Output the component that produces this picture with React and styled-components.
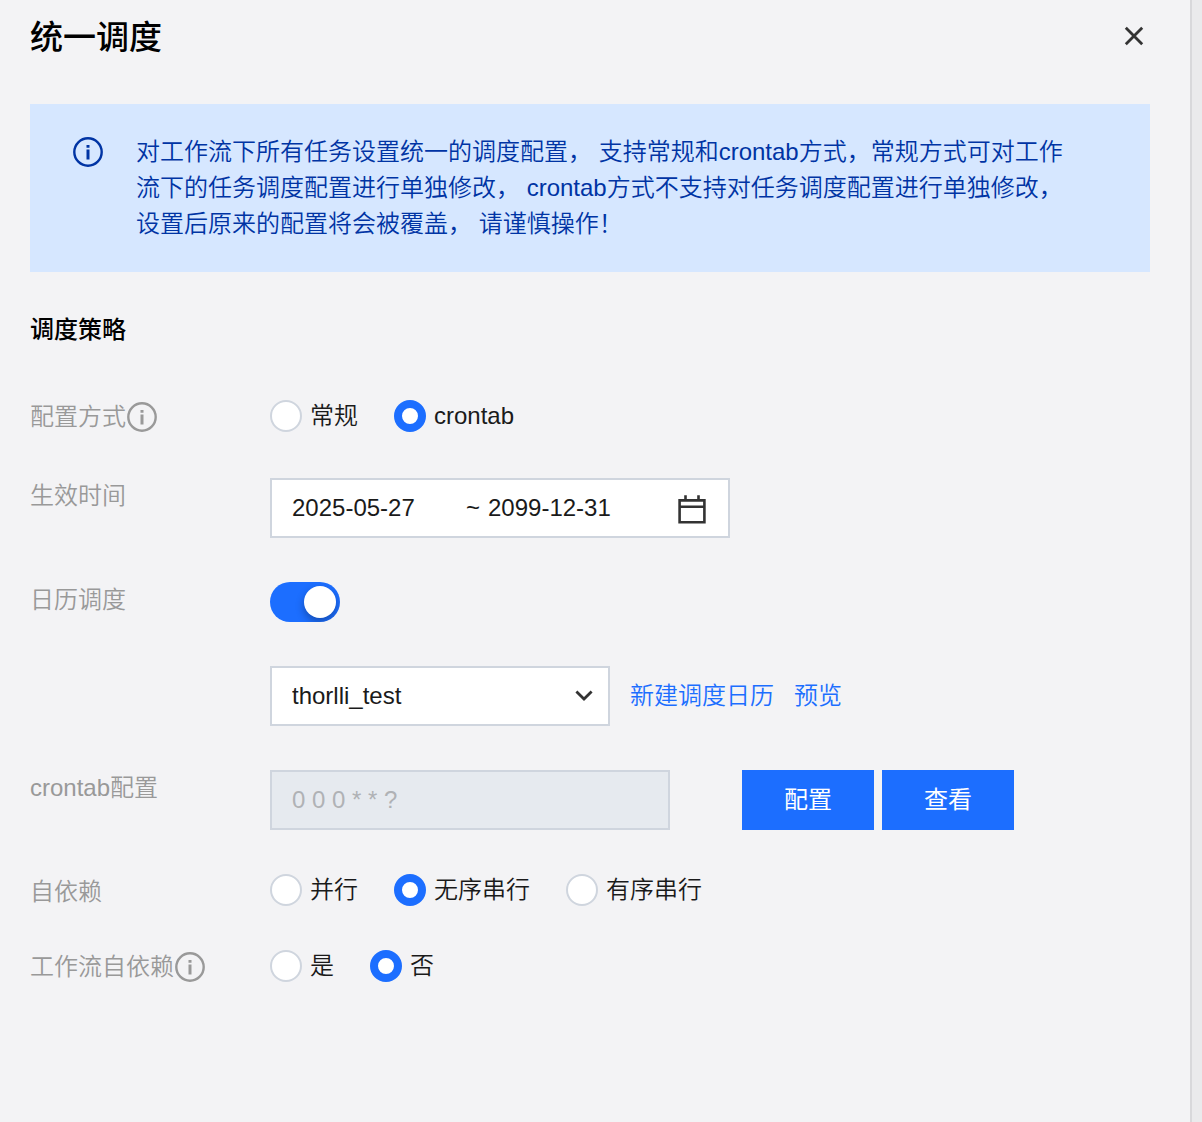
import React, { useState } from 'react';
import styled, { createGlobalStyle } from 'styled-components';

const InfoIcon = () => (
  <svg width="32" height="32" viewBox="0 0 32 32" fill="none" aria-hidden="true">
    <circle cx="16" cy="16" r="13.7" stroke="currentColor" strokeWidth="2.4" />
    <path d="M14.5 9h3v2.8h-3zM14.5 13.6h3v10h-3z" fill="currentColor" />
  </svg>
);

const CloseIcon = () => (
  <svg width="32" height="32" viewBox="0 0 32 32" fill="none" aria-hidden="true">
    <path d="M7.8 7.8l16.4 16.4M24.2 7.8L7.8 24.2" stroke="currentColor" strokeWidth="2.8" />
  </svg>
);

const CalendarIcon = () => (
  <svg width="32" height="32" viewBox="0 0 32 32" fill="none" aria-hidden="true">
    <path
      d="M3.6 8.4h24.8v21.8H3.6zM3.6 14.8h24.8M9.5 3.2v5.2M22.5 3.2v5.2"
      stroke="currentColor"
      strokeWidth="2.6"
    />
  </svg>
);

const ArrowIcon = () => (
  <svg width="32" height="32" viewBox="0 0 32 32" fill="none" aria-hidden="true">
    <path d="M8.4 11.6l7.6 7.4 7.6-7.4" stroke="currentColor" strokeWidth="2.8" />
  </svg>
);

const RadioGroup = ({ name, label, options, value, onChange }) => (
  <Radios role="radiogroup" aria-label={label}>
    {options.map((option) => (
      <RadioLabel key={option}>
        <Radio
          type="radio"
          name={name}
          value={option}
          checked={value === option}
          onChange={() => onChange(option)}
        />
        {option}
      </RadioLabel>
    ))}
  </Radios>
);

const App = () => {
  const [mode, setMode] = useState('crontab');
  const [startDate, setStartDate] = useState('2025-05-27');
  const [endDate, setEndDate] = useState('2099-12-31');
  const [useCalendar, setUseCalendar] = useState(true);
  const [selfDepend, setSelfDepend] = useState('无序串行');
  const [flowDepend, setFlowDepend] = useState('否');

  return (
    <>
      <GlobalStyle />
      <Panel>
        <Header>
          <Title>统一调度</Title>
          <CloseButton type="button" aria-label="关闭">
            <CloseIcon />
          </CloseButton>
        </Header>

        <Notice>
          <NoticeIcon>
            <InfoIcon />
          </NoticeIcon>
          <NoticeText>
            对工作流下所有任务设置统一的调度配置， 支持常规和crontab方式，常规方式可对工作流下的任务调度配置进行单独修改， crontab方式不支持对任务调度配置进行单独修改，设置后原来的配置将会被覆盖， 请谨慎操作！
          </NoticeText>
        </Notice>

        <SectionTitle>调度策略</SectionTitle>

        <Form onSubmit={(e) => e.preventDefault()}>
          <Row>
            <HintLabel>
              配置方式
              <InfoIcon />
            </HintLabel>
            <Control>
              <RadioGroup
                name="mode"
                label="配置方式"
                options={['常规', 'crontab']}
                value={mode}
                onChange={setMode}
              />
            </Control>
          </Row>

          <Row>
            <Label htmlFor="start-date">生效时间</Label>
            <Control>
              <DateRange>
                <StartInput
                  id="start-date"
                  value={startDate}
                  onChange={(e) => setStartDate(e.target.value)}
                />
                <span>~</span>
                <EndInput
                  aria-label="结束时间"
                  value={endDate}
                  onChange={(e) => setEndDate(e.target.value)}
                />
                <CalendarIcon />
              </DateRange>
            </Control>
          </Row>

          <Row>
            <Label htmlFor="use-calendar">日历调度</Label>
            <Control>
              <Switch
                id="use-calendar"
                type="checkbox"
                role="switch"
                checked={useCalendar}
                onChange={(e) => setUseCalendar(e.target.checked)}
              />
            </Control>
          </Row>

          <Row>
            <span />
            <Control>
              <SelectBox>
                <Select aria-label="调度日历" defaultValue="thorlli_test">
                  <option value="thorlli_test">thorlli_test</option>
                </Select>
                <ArrowIcon />
              </SelectBox>
              <Links>
                <Link href="#new">新建调度日历</Link>
                <Link href="#preview">预览</Link>
              </Links>
            </Control>
          </Row>

          <Row>
            <Label htmlFor="crontab">crontab配置</Label>
            <Control>
              <CrontabInput id="crontab" value="0 0 0 * * ?" disabled readOnly />
              <Buttons>
                <Button type="button">配置</Button>
                <Button type="button">查看</Button>
              </Buttons>
            </Control>
          </Row>

          <Row>
            <Label as="span">自依赖</Label>
            <Control>
              <RadioGroup
                name="self-depend"
                label="自依赖"
                options={['并行', '无序串行', '有序串行']}
                value={selfDepend}
                onChange={setSelfDepend}
              />
            </Control>
          </Row>

          <Row>
            <HintLabel>
              工作流自依赖
              <InfoIcon />
            </HintLabel>
            <Control>
              <RadioGroup
                name="flow-depend"
                label="工作流自依赖"
                options={['是', '否']}
                value={flowDepend}
                onChange={setFlowDepend}
              />
            </Control>
          </Row>
        </Form>
      </Panel>
    </>
  );
};

export default App;

const GlobalStyle = createGlobalStyle`
  * {
    box-sizing: border-box;
  }
  body {
    margin: 0;
    background: #eaeaec;
    color: #1a1a1a;
    font-family: "Liberation Sans", "Noto Sans CJK SC", sans-serif;
    font-size: 24px;
    font-weight: 350;
    line-height: 36px;
  }
  input, select, button {
    margin: 0;
    font: inherit;
    color: inherit;
  }
`;

const Panel = styled.main`
  min-height: 100vh;
  margin-right: 10px;
  padding: 0 40px 0 30px;
  background: #f3f3f5;
  border-right: 2px solid #d8d8db;
`;

const Header = styled.header`
  display: flex;
  align-items: flex-start;
  justify-content: space-between;
  padding: 12px 0 40px;
`;

const Title = styled.h1`
  margin: 0;
  color: #000;
  font-size: 33px;
  font-weight: 500;
  line-height: 52px;
`;

const CloseButton = styled.button`
  display: flex;
  align-items: center;
  height: 48px;
  padding: 0;
  border: 0;
  background: none;
  color: #333;
  cursor: pointer;
`;

const Notice = styled.div`
  display: flex;
  gap: 32px;
  padding: 30px 80px 30px 42px;
  background: #d6e7ff;
  color: #0034a4;
`;

const NoticeIcon = styled.span`
  display: flex;
  align-items: center;
  flex: none;
  height: 36px;
`;

const NoticeText = styled.p`
  margin: 0;
`;

const SectionTitle = styled.h2`
  margin: 40px 0 52px;
  color: #000;
  font-size: 24px;
  font-weight: 500;
`;

const Form = styled.form`
  display: flex;
  flex-direction: column;
`;

const Row = styled.div`
  display: grid;
  grid-template-columns: 240px 1fr;
`;

const Label = styled.label`
  color: #999;
`;

const HintLabel = styled.span`
  display: flex;
  align-items: center;
  height: 34px;
  margin-bottom: 44px;
  color: #999;
`;

const Control = styled.div`
  display: flex;
  align-items: center;
  align-self: start;
  padding-bottom: 44px;
`;

const Radios = styled.div`
  display: flex;
  gap: 36px;
`;

const RadioLabel = styled.label`
  display: flex;
  align-items: center;
  gap: 8px;
  line-height: 32px;
  cursor: pointer;
`;

const Radio = styled.input`
  appearance: none;
  width: 32px;
  height: 32px;
  background: #fff;
  border: 2px solid #cfd5de;
  border-radius: 50%;
  &:checked {
    border: 8px solid #1c6eff;
  }
`;

const DateRange = styled.div`
  display: flex;
  align-items: center;
  width: 460px;
  height: 60px;
  padding: 0 20px;
  background: #fff;
  border: 2px solid #cfd5de;
  svg {
    flex: none;
    color: #333;
  }
`;

const PlainInput = styled.input`
  min-width: 0;
  padding: 0;
  border: 0;
  outline: 0;
  background: none;
`;

const StartInput = styled(PlainInput)`
  width: 174px;
`;

const EndInput = styled(PlainInput)`
  flex: 1;
  margin-left: 8px;
`;

const Switch = styled.input`
  appearance: none;
  display: flex;
  overflow: hidden;
  width: 70px;
  height: 40px;
  padding: 4px;
  background: #cfd5de;
  border-radius: 20px;
  cursor: pointer;
  &::before {
    content: '';
    width: 32px;
    height: 32px;
    background: #fff;
    border-radius: 50%;
    box-shadow: 0 4px 8px rgba(0, 0, 0, 0.3);
  }
  &:checked {
    justify-content: flex-end;
    background: #1c6eff;
  }
`;

const SelectBox = styled.div`
  display: grid;
  align-items: center;
  width: 340px;
  height: 60px;
  background: #fff;
  border: 2px solid #cfd5de;
  select, svg {
    grid-area: 1 / 1;
  }
  svg {
    justify-self: end;
    margin-right: 8px;
    color: #333;
    pointer-events: none;
  }
`;

const Select = styled.select`
  appearance: none;
  width: 100%;
  height: 56px;
  padding: 0 48px 0 20px;
  border: 0;
  background: none;
`;

const Links = styled.div`
  display: flex;
  gap: 20px;
  margin-left: 20px;
`;

const Link = styled.a`
  color: #1c6eff;
  text-decoration: none;
`;

const CrontabInput = styled.input`
  width: 400px;
  height: 60px;
  padding: 0 20px;
  background: #e6eaef;
  border: 2px solid #cfd5de;
  border-radius: 0;
  color: #b0b2b5;
`;

const Buttons = styled.div`
  display: flex;
  gap: 8px;
  margin-left: 72px;
`;

const Button = styled.button`
  width: 132px;
  height: 60px;
  padding: 0;
  border: 0;
  background: #1c6eff;
  color: #fff;
  font-weight: 400;
  cursor: pointer;
`;
